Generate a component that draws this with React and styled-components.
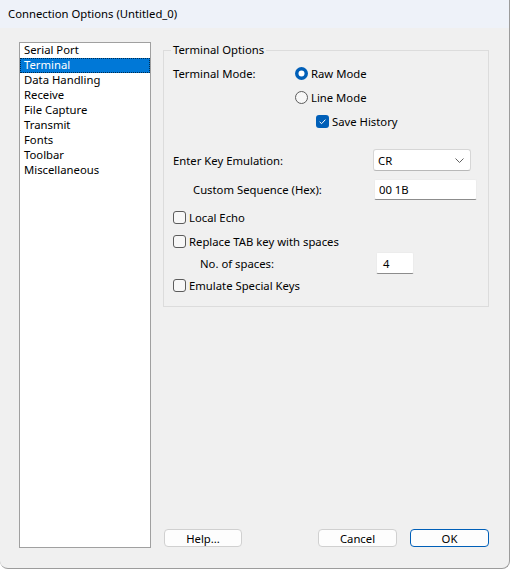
import styled, { createGlobalStyle } from 'styled-components'

const GlobalStyle = createGlobalStyle`
  html, body {
    margin: 0;
    padding: 0;
    background: #ffffff;
  }
  * {
    box-sizing: border-box;
  }
`

const Window = styled.div`
  width: 510px;
  height: 569px;
  background: #f0f0f0;
  border-right: 1px solid #9c9c9c;
  border-bottom: 1px solid #9c9c9c;
  border-radius: 0 0 8px 8px;
  display: flex;
  flex-direction: column;
  font-family: 'Segoe UI', 'Noto Sans', sans-serif;
  font-size: 11.3px;
  line-height: 15px;
  color: #000;
  overflow: hidden;
`
const TitleBar = styled.div`
  height: 28px;
  flex-shrink: 0;
  background: #eef2f9;
  display: flex;
  align-items: center;
  padding-left: 8px;
  padding-bottom: 1px;
`
const Body = styled.div`
  display: flex;
  flex-direction: row;
  padding: 14px 0 0 19px;
`
const ListBox = styled.div`
  width: 132px;
  height: 506px;
  background: #fff;
  border: 1px solid #a0a0a0;
  display: flex;
  flex-direction: column;
`
const ListItem = styled.div`
  height: 15px;
  line-height: 14px;
  padding-left: 4px;
  background: ${p => (p.$selected ? '#0078d7' : 'transparent')};
  color: ${p => (p.$selected ? '#fff' : '#000')};
  outline: ${p => (p.$selected ? '1px dotted #002b4d' : 'none')};
  outline-offset: -1px;
`
const RightColumn = styled.div`
  margin-left: 12px;
  width: 326px;
  height: 505px;
  display: flex;
  flex-direction: column;
`
const Group = styled.div`
  margin-top: 8px;
  height: 257px;
  border: 1px solid #dcdcdc;
  display: flex;
  flex-direction: column;
  padding-left: 9px;
`
const Caption = styled.div`
  align-self: flex-start;
  margin: -9px 0 0 -2px;
  padding: 0 2px;
  line-height: 16px;
  background: #f0f0f0;
`
const Row = styled.div`
  display: flex;
  flex-direction: row;
  align-items: center;
  height: ${p => p.$h || 24}px;
  margin-top: ${p => p.$top || 0}px;
  padding-left: ${p => p.$indent || 0}px;
`
const Label = styled.div`
  width: ${p => p.$w}px;
  flex-shrink: 0;
`
const Option = styled.label`
  display: flex;
  align-items: center;
  gap: 3px;
  white-space: nowrap;
`
const Combo = styled.div`
  width: 98px;
  height: 22px;
  background: #fff;
  border: 1px solid #d6d6d6;
  border-bottom-color: #b8b8b8;
  border-radius: 3px;
  display: flex;
  align-items: center;
  justify-content: space-between;
  padding: 0 6px 0 4px;
`
const TextBox = styled.div`
  width: ${p => p.$w}px;
  height: ${p => p.$h}px;
  background: #fff;
  border: 1px solid #ececec;
  border-bottom: 1px solid #8c8c8c;
  border-radius: 2px;
  display: flex;
  align-items: center;
  padding-left: ${p => p.$pad || 4}px;
`
const ButtonBar = styled.div`
  margin-top: auto;
  display: flex;
  flex-direction: row;
  align-items: center;
  padding-left: 1px;
  gap: 13px;
`
const Button = styled.div`
  width: ${p => p.$w || 79}px;
  height: 18px;
  background: #fdfdfd;
  border: 1px solid ${p => (p.$primary ? '#005fb8' : '#d0d0d0')};
  border-radius: 4px;
  display: flex;
  align-items: center;
  justify-content: center;
  margin-right: ${p => (p.$push ? 'auto' : '0')};
`

const Radio = ({ checked }) => (
  <svg width='13' height='13' viewBox='0 0 13 13'>
    {checked ? (
      <>
        <circle cx='6.5' cy='6.5' r='6.5' fill='#005fb8' />
        <circle cx='6.5' cy='6.5' r='3' fill='#fff' />
      </>
    ) : (
      <circle cx='6.5' cy='6.5' r='6' fill='#f7f7f7' stroke='#5c5c5c' strokeWidth='1' />
    )}
  </svg>
)

const Check = ({ checked }) => (
  <svg width='13' height='13' viewBox='0 0 13 13'>
    {checked ? (
      <>
        <rect x='0' y='0' width='13' height='13' rx='3' fill='#005fb8' />
        <path d='M3.6 6.8 L5.6 8.7 L9.4 4.6' fill='none' stroke='#fff' strokeWidth='1' />
      </>
    ) : (
      <rect x='0.5' y='0.5' width='12' height='12' rx='2.5' fill='#f7f7f7' stroke='#5c5c5c' />
    )}
  </svg>
)

const pages = [
  'Serial Port',
  'Terminal',
  'Data Handling',
  'Receive',
  'File Capture',
  'Transmit',
  'Fonts',
  'Toolbar',
  'Miscellaneous'
]

const App = () => {
  return (
    <>
      <GlobalStyle />
      <Window>
        <TitleBar>Connection Options (Untitled_0)</TitleBar>
        <Body>
          <ListBox>
            {pages.map(p => (
              <ListItem key={p} $selected={p === 'Terminal'}>
                {p}
              </ListItem>
            ))}
          </ListBox>
          <RightColumn>
            <Group>
              <Caption>Terminal Options</Caption>
              <Row $top={3}>
                <Label $w={122}>Terminal Mode:</Label>
                <Option>
                  <Radio checked />
                  Raw Mode
                </Option>
              </Row>
              <Row $indent={122}>
                <Option>
                  <Radio />
                  Line Mode
                </Option>
              </Row>
              <Row $indent={143}>
                <Option>
                  <Check checked />
                  Save History
                </Option>
              </Row>
              <Row $top={16} $h={22}>
                <Label $w={200}>Enter Key Emulation:</Label>
                <Combo>
                  CR
                  <svg width='9' height='5' viewBox='0 0 9 5'>
                    <path d='M0.5 0.5 L4.5 4.5 L8.5 0.5' fill='none' stroke='#606060' strokeWidth='1' />
                  </svg>
                </Combo>
              </Row>
              <Row $top={8} $h={21} $indent={20}>
                <Label $w={181}>Custom Sequence (Hex):</Label>
                <TextBox $w={103} $h={21}>00 1B</TextBox>
              </Row>
              <Row $top={7} $h={20}>
                <Option>
                  <Check />
                  Local Echo
                </Option>
              </Row>
              <Row $top={4} $h={20}>
                <Option>
                  <Check />
                  Replace TAB key with spaces
                </Option>
              </Row>
              <Row $top={1} $h={22} $indent={27}>
                <Label $w={176}>No. of spaces:</Label>
                <TextBox $w={38} $h={22} $pad={6}>4</TextBox>
              </Row>
              <Row $top={1} $h={20}>
                <Option>
                  <Check />
                  Emulate Special Keys
                </Option>
              </Row>
            </Group>
            <ButtonBar>
              <Button $w={78} $push>Help...</Button>
              <Button>Cancel</Button>
              <Button $primary>OK</Button>
            </ButtonBar>
          </RightColumn>
        </Body>
      </Window>
    </>
  )
}

export default App
